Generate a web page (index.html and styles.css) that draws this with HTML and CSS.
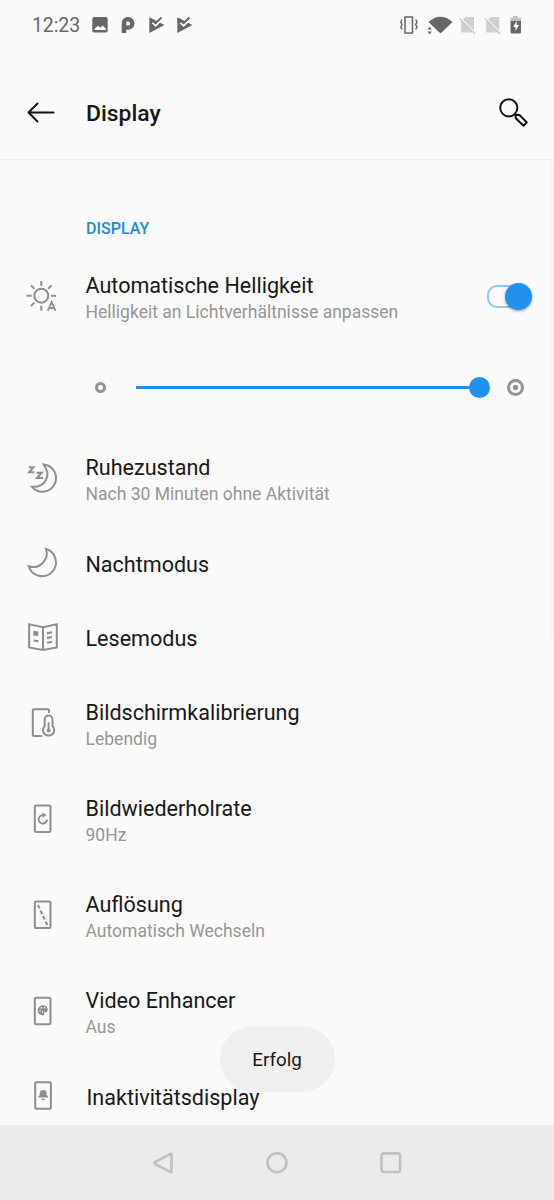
FILE: index.html
```html
<!DOCTYPE html>
<html lang="de">
<head>
<meta charset="utf-8">
<title>Display</title>
<link rel="stylesheet" href="styles.css">
</head>
<body>
<div class="screen">
  <div class="status">
    <span class="clock">12:23</span>
    <svg class="notifications" width="104" height="24" viewBox="0 0 104 24" fill="#666">
      <path fill-rule="evenodd" d="M2 4h12q1.700 0 1.700 1.700v12.100q0 1.700-1.700 1.700h-12q-1.700 0-1.700-1.700v-12.100q0-1.700 1.700-1.700zM2.500 17h11.300v-1.500l-3.300-3-2 2.300-2.500-2-3.500 3z"/>
      <path fill-rule="evenodd" d="M29.700 20v-9.600a6.400 6.400 0 1 1 6.300 6.400h-1.800V20zM34.400 8.400v4h1.800a2 2 0 1 0 0-4z"/>
      <g id="play"><path d="M57.300 4.200L72.500 12l-15.200 8z"/><path d="M60.500 9.500l3.100 3 6.500-6.300" fill="none" stroke="#fafafa" stroke-width="2.200"/><path d="M60 7l3.500 3.200 6-5.700" fill="none" stroke="#666" stroke-width="2"/></g>
      <use href="#play" x="28"/>
    </svg>
    <svg class="system" width="128" height="24" viewBox="0 0 128 24" fill="#666">
      <path d="M5 4h7.500v16H5zM2 6.500L.8 9 2 11.500.8 14 2 16.500M15.700 6.500L17 9l-1.300 2.500L17 14l-1.300 2.500" fill="none" stroke="#666" stroke-width="1.500"/>
      <path d="M28.500 9q12-10.500 24 0l-12 11.500zM27.500 16.500l2.200-2.700 2.200 2.700zM27.500 18.500l2.200 2.700 2.200-2.700z"/>
      <g id="nosim"><path d="M65.500 4h8.500v15.500H61V8.500z" fill="#d0d0d0"/><path d="M60.500 5l16 16" stroke="#fafafa" stroke-width="1.300"/><path d="M59.500 5.500l15.500 15.500" stroke="#c9c9c9" stroke-width="1.500"/></g>
      <use href="#nosim" x="25.200"/>
      <path d="M110.500 5h2.500v-2h5v2h3v4h-10.500z" fill="#c2c2c2"/>
      <path d="M110.500 8H121v11.500q0 1-1 1h-8.500q-1 0-1-1z"/><path d="M116.500 8l-3.300 6h2.300v4l3.600-6h-2.500v-4z" fill="#fff"/>
    </svg>
  </div>

  <header class="header">
    <svg class="back" width="32" height="28" viewBox="0 0 32 28"><path d="M28.500 13.500H3.500M12.500 4.500l-9 9 9 9" fill="none" stroke="#111" stroke-width="2" stroke-linejoin="round" stroke-linecap="round"/></svg>
    <h1>Display</h1>
    <svg class="search" width="32" height="32" viewBox="0 0 32 32" fill="none" stroke="#111"><circle cx="11.800" cy="10.800" r="8.600" stroke-width="2"/><path d="M18.300 17.800l4.200.2 7.300 7.400-3.200 3.300-7.600-7.200z" stroke-width="2" stroke-linejoin="round"/></svg>
  </header>

  <main class="list">
    <h2>DISPLAY</h2>
    <div class="row first">
      <svg class="icon" viewBox="0 0 40 40"><circle cx="19.300" cy="16.700" r="7"/><path d="M19.300 2v5M19.300 26.700v5M4.700 16.700h5M29 16.700h5M9 6.400l3.400 3.400M29.600 6.400l-3.400 3.400M9 27l3.400-3.400"/><path d="M25.700 32l3.900-9 3.900 9M27 29h5.200" stroke-width="1.800"/></svg>
      <div class="copy"><div class="title">Automatische Helligkeit</div><div class="sub">Helligkeit an Lichtverhältnisse anpassen</div></div>
      <div class="switch"><span class="knob"></span></div>
    </div>
    <div class="slider">
      <span class="dim"></span><span class="track"></span><span class="thumb"></span><span class="bright"></span>
    </div>
    <div class="row">
      <svg class="icon" viewBox="0 0 40 40"><path d="M21.800 4.500A13.600 13.600 0 1 1 10 26.800C23 27.500 30 16 21.800 4.500z"/><path d="M6.700 7.200h4.700L7.200 12.200h5.200M14.500 12.700h5.200L15 18h6" stroke-width="2.100"/></svg>
      <div class="copy"><div class="title">Ruhezustand</div><div class="sub">Nach 30 Minuten ohne Aktivität</div></div>
    </div>
    <div class="row short">
      <svg class="icon" viewBox="0 0 40 40"><path d="M24 4A13.900 13.900 0 1 1 6.700 21.300A13.700 13.700 0 0 0 24 4z"/></svg>
      <div class="copy"><div class="title">Nachtmodus</div></div>
    </div>
    <div class="row short">
      <svg class="icon" viewBox="0 0 40 40"><path d="M7.100 5.200L21 8.300l13.800-3.100v23.300L21 31 7.100 28.500zM21 8.300V31M11.500 21.500l5 .8M25 14.300l5-1M25 18.900l5-1M25 23.700l5-1"/><path d="M11.300 11.800l5 .7v4.500l-5-.5z" class="solid"/></svg>
      <div class="copy"><div class="title">Lesemodus</div></div>
    </div>
    <div class="row shifted">
      <svg class="icon" viewBox="0 0 40 40"><path d="M27 8V5.500q0-1.200-1.200-1.200H12q-1.200 0-1.200 1.200v24.300q0 1.200 1.200 1.200h8.300"/><path d="M22.700 21v-6.500a3.900 3.900 0 0 1 7.800 0V21a5.600 5.600 0 1 1-7.800 0z"/><path d="M26.600 17.300v7"/><circle cx="26.600" cy="25.500" r="2" class="solid"/></svg>
      <div class="copy"><div class="title">Bildschirmkalibrierung</div><div class="sub">Lebendig</div></div>
    </div>
    <div class="row">
      <svg class="icon" viewBox="0 0 40 40"><rect x="12.800" y="4.500" width="15.700" height="26.500" rx="1.200"/><path d="M21.500 14.200A4.200 4.200 0 1 0 25 18.600" stroke-width="1.800"/><path d="M20.500 11.500l4 2.600-4 3z" class="solid"/></svg>
      <div class="copy"><div class="title">Bildwiederholrate</div><div class="sub">90Hz</div></div>
    </div>
    <div class="row">
      <svg class="icon" viewBox="0 0 40 40"><rect x="12.800" y="4.600" width="15.700" height="26.500" rx="1.200"/><path d="M15.900 8l9.400 20" stroke-dasharray="3.800 2.300"/></svg>
      <div class="copy"><div class="title">Auflösung</div><div class="sub">Automatisch Wechseln</div></div>
    </div>
    <div class="row">
      <svg class="icon" viewBox="0 0 40 40"><rect x="12.800" y="4.800" width="15.700" height="26.500" rx="1.200"/><path d="M20.800 12.300c3 0 5 2 5 4.500 0 2-1.500 2.500-3 2.500-1.200 0-1 .8-.7 1.500.3 1-.4 1.700-1.300 1.700a5 5 0 0 1 0-10.200z" class="solid"/><g class="holes"><circle cx="18" cy="17.800" r=".8"/><circle cx="19.300" cy="14.900" r=".8"/><circle cx="22.500" cy="14.800" r=".8"/><circle cx="20.600" cy="19" r=".7"/></g></svg>
      <div class="copy"><div class="title">Video Enhancer</div><div class="sub">Aus</div></div>
    </div>
    <div class="row short last">
      <svg class="icon" viewBox="0 0 40 40"><rect x="13.200" y="4.300" width="15.700" height="26.500" rx="1.200"/><path d="M16.200 19.400v-1l1.500-1.200v-2q0-3.300 3.500-3.300t3.500 3.300v2l1.500 1.200v1zM19.200 20.800h4q-.5 1.700-2 1.700t-2-1.700z" class="solid"/></svg>
      <div class="copy"><div class="title">Inaktivitätsdisplay</div></div>
    </div>
  </main>

  <nav class="nav">
    <svg width="24" height="24" viewBox="0 0 24 24"><path d="M20.500 3.500v17q0 1-1 .6L4 12.900q-1-.9 0-1.700l15.500-8.300q1-.4 1 .6z"/></svg>
    <svg width="24" height="24" viewBox="0 0 24 24"><circle cx="12" cy="11.700" r="9.500"/></svg>
    <svg width="24" height="24" viewBox="0 0 24 24"><rect x="2.500" y="2.400" width="18.600" height="18.600" rx="2.500"/></svg>
  </nav>
  <div class="toast">Erfolg</div>
  <span class="scrollbar"></span>
</div>
</body>
</html>
```
FILE: styles.css
```css
* { box-sizing: border-box; }
body { margin: 0; background: #fafafa; font-family: Roboto, "Liberation Sans", sans-serif; color: #171717; }
.screen { position: relative; width: 554px; height: 1200px; overflow: hidden; display: flex; flex-direction: column; }
svg { display: block; flex: none; }
.status { height: 50px; flex: none; display: flex; align-items: center; padding: 0 26px 0 32px; }
.clock { width: 60px; font-size: 19.500px; line-height: 24px; padding-top: 2px; color: #666; letter-spacing: -.1px; }
.system { margin-left: auto; }
.header { height: 110px; flex: none; display: flex; align-items: center; padding: 16px 25px 0 25px; border-bottom: 1.500px solid #ededed; }
h1 { margin: 0 0 0 29px; padding-top: 2px; font-size: 22.900px; font-weight: 500; line-height: 30px; flex: 1; }
.list { flex: 1; min-height: 0; overflow: hidden; }
h2 { margin: 0; height: 91px; padding: 59px 0 0 86px; font-size: 16px; line-height: 20px; font-weight: 500; color: #2389dd; }
.row { height: 96px; display: flex; align-items: center; padding: 0 22px; position: relative; z-index: 2; }
.row.first { height: 95px; }
.row.short { height: 74px; }
.row.shifted { margin-top: 1px; }
.icon { width: 40px; height: 40px; margin-right: 23.500px; fill: none; stroke: #8e8e8e; stroke-width: 2; }
.icon .solid { fill: #8e8e8e; stroke: none; }
.icon .holes { fill: #fafafa; stroke: none; }
.copy { flex: 1; white-space: nowrap; }
.title { font-size: 21.560px; line-height: 28px; margin-top: -1px; padding-bottom: 1px; }
.short .title { margin-top: 0; padding-bottom: 0; }
.last .title { padding-left: 1px; }
.sub { font-size: 17.550px; line-height: 24px; margin-top: -1px; color: #959595; }
.switch { width: 45px; height: 30px; display: flex; align-items: center; justify-content: flex-end; margin-top: -4px; }
.switch::before { content: ""; flex: 1; height: 19px; margin-right: -14px; border: 2px solid #90c5f0; border-radius: 10px; background: #fafafa; }
.knob { width: 27px; height: 27px; border-radius: 50%; background: #2191ef; box-shadow: 0 1px 3px #0006; z-index: 1; }
.slider { height: 86px; display: flex; align-items: center; padding: 0 30px 4px 95px; }
.dim { width: 11px; height: 11px; border: 3px solid #929292; border-radius: 50%; }
.track { flex: 1; height: 3px; margin-left: 30px; background: #2191ef; }
.thumb { width: 21px; height: 21px; border-radius: 50%; background: #2191ef; margin-left: -1px; }
.bright { width: 17px; height: 17px; margin-left: 17px; border: 3px solid #929292; border-radius: 50%; background: radial-gradient(circle, #929292 2.400px, #fafafa 3.100px); }
.nav { height: 75px; flex: none; background: #ebebeb; display: flex; align-items: center; justify-content: center; gap: 90px; z-index: 3; }
.nav svg { fill: none; stroke: #c0c0c0; stroke-width: 2.600; }
.toast { position: absolute; left: 219.500px; top: 1026px; width: 115px; height: 66px; border-radius: 33px; background: #efefef; font-size: 18.800px; line-height: 69px; text-align: center; z-index: 1; }
.scrollbar { position: absolute; right: 0; top: 161px; width: 4px; height: 475px; background: #f5f5f5; }
```
